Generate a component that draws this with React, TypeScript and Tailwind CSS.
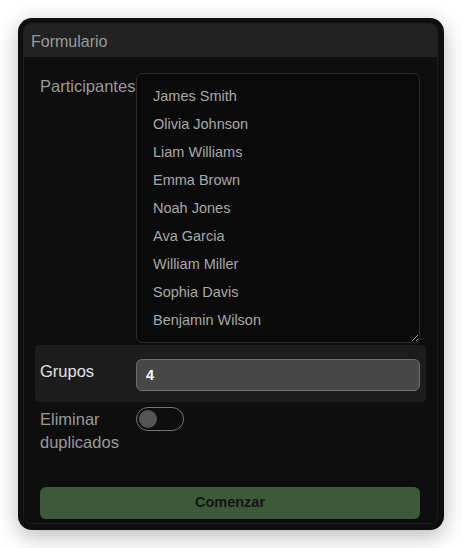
import React, { useState } from 'react';

const participantes = [
  'James Smith',
  'Olivia Johnson',
  'Liam Williams',
  'Emma Brown',
  'Noah Jones',
  'Ava Garcia',
  'William Miller',
  'Sophia Davis',
  'Benjamin Wilson',
];

export default function App() {
  const [nombres, setNombres] = useState(participantes.join('\n'));
  const [grupos, setGrupos] = useState('4');
  const [sinDuplicados, setSinDuplicados] = useState(false);

  return (
    <div className="w-[462px] h-[548px] bg-white p-[18px] font-['Liberation_Sans',Arial,sans-serif]">
      <div className="w-[426px] h-[512px] rounded-[14px] bg-[#0e0e0e] pl-[5px] pt-[5px] pr-[6px] pb-[6px] shadow-[0_6px_22px_rgba(0,0,0,0.28)]">
        <div className="h-full rounded-[8px] border border-[#1e1e1e] flex flex-col overflow-hidden">
          {/* Header */}
          <div className="h-[33px] shrink-0 bg-[#222222] px-[7px] pt-[2px] flex items-center text-[16px] text-[#9a9a9a]">
            Formulario
          </div>

          {/* Body */}
          <div className="px-[11px] pt-[16px] flex flex-col">
            {/* Participantes */}
            <div className="flex px-[5px]">
              <label className="w-[96px] shrink-0 pt-[3px] text-[16.5px] leading-[20px] text-[#9a9a9a] whitespace-nowrap">
                Participantes
              </label>
              <textarea
                value={nombres}
                onChange={(e) => setNombres(e.target.value)}
                className="w-[284px] h-[270px] rounded-[6px] border border-[#2a2a2a] bg-[#0b0b0b] px-[16px] pt-[8px] text-[14.5px] leading-[28px] text-[#a8a8a8] outline-none [color-scheme:dark] font-['Liberation_Sans',Arial,sans-serif]"
              />
            </div>

            {/* Grupos */}
            <div className="mt-[2px] h-[57px] rounded-[4px] bg-[#1c1c1c] px-[5px] flex items-center">
              <label className="w-[96px] shrink-0 mb-[4px] text-[16.5px] text-[#e2e2e2]">Grupos</label>
              <input
                value={grupos}
                onChange={(e) => setGrupos(e.target.value)}
                className="mt-[2px] w-[284px] h-[32px] rounded-[6px] border border-[#6e6e6e] bg-[#474747] px-[9px] text-[14.5px] font-semibold text-white outline-none font-['Liberation_Sans',Arial,sans-serif]"
              />
            </div>

            {/* Eliminar duplicados */}
            <div className="pt-[5px] px-[5px] flex">
              <label className="w-[96px] shrink-0 pt-[1px] text-[16.5px] leading-[23px] text-[#9a9a9a]">
                Eliminar duplicados
              </label>
              <button
                type="button"
                onClick={() => setSinDuplicados(!sinDuplicados)}
                className="relative w-[48px] h-[24px] rounded-full border-[1.5px] border-[#757575] bg-transparent"
              >
                <span
                  className={
                    sinDuplicados
                      ? 'absolute top-[2px] left-[26px] w-[18px] h-[18px] rounded-full bg-[#6a6a6a]'
                      : 'absolute top-[2px] left-[2px] w-[18px] h-[18px] rounded-full bg-[#555555]'
                  }
                />
              </button>
            </div>

            {/* Comenzar */}
            <div className="mt-[33px] px-[5px]">
              <button
                type="button"
                className="w-[380px] h-[32px] rounded-[6px] bg-[#3c5a3a] text-[14.5px] font-semibold text-[#141414]"
              >
                Comenzar
              </button>
            </div>
          </div>
        </div>
      </div>
    </div>
  );
}
